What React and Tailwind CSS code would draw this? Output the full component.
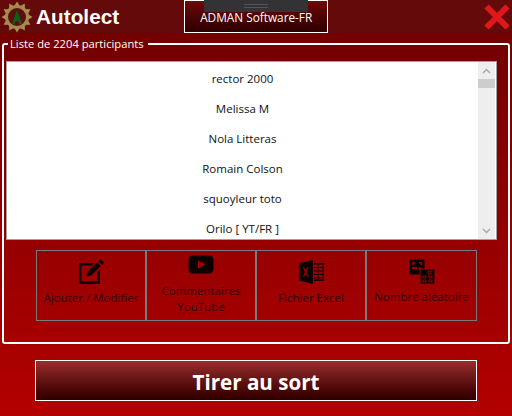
const participants = ["rector 2000", "Melissa M", "Nola Litteras", "Romain Colson", "squoyleur toto", "Orilo [ YT/FR ]"];

const LogoIcon = () => {
    const teeth = Array.from({ length: 12 }, (_, i) => i * 30);
    return (
        <svg width="32" height="32" viewBox="0 0 32 32">
            {teeth.map((a) => (
                <polygon key={a} points="13,5.500 16,0.500 19,5.500" fill="#a8945a" transform={`rotate(${a} 16 16)`} />
            ))}
            <circle cx="16" cy="16" r="10.500" fill="#5a1010" stroke="#a8894a" strokeWidth="3" />
            <path d="M16 9 L21 23 H18.400 L17.600 20 H14.400 L13.600 23 H11 Z" fill="#0a6214" />
        </svg>
    );
};

const EditIcon = () => (
    <svg width="26" height="26" viewBox="0 0 26 26" fill="#0c0000">
        <path d="M1 4h15l-2.400 2.400H3.400v16.200h16.200V13l2.400-2.400V25H1z" />
        <path d="M9.500 12.800 19 3.300l3.700 3.700-9.500 9.500-4.700 1z" />
        <path d="M20.200 2.100 21.500 0.900a1.300 1.300 0 0 1 1.800 0l1.900 1.900a1.300 1.300 0 0 1 0 1.800l-1.300 1.300z" />
    </svg>
);

const YoutubeIcon = () => (
    <svg width="26" height="19" viewBox="0 0 26 19">
        <rect x="0.500" y="0.500" width="25" height="18" rx="4.500" fill="#0c0000" />
        <path d="M10 5.500 17.500 9.500 10 13.500z" fill="#a00000" />
    </svg>
);

const ExcelIcon = () => (
    <svg width="26" height="26" viewBox="0 0 26 26" fill="#0c0000">
        <path d="M1 4.500 15 1v24L1 21.500z" />
        <path d="M16 4h10v18H16v-1.500h8.500V5.500H16z" />
        <path d="M16 8.500h9M16 12h9M16 15.500h9M16 19h9M20 5v16" stroke="#0c0000" strokeWidth="1" />
        <path d="M5.500 8.500 10 17.500M10 8.500 5.500 17.500" stroke="#a00000" strokeWidth="1.300" />
    </svg>
);

const DiceIcon = () => (
    <svg width="26" height="25" viewBox="0 0 26 25">
        <rect x="0.500" y="0.500" width="15" height="15" rx="1.500" fill="#0c0000" />
        <rect x="11" y="10" width="15" height="15" rx="1.500" fill="#0c0000" stroke="#a00000" strokeWidth="1" />
        <path d="M3 3h3v1.500H4.500V6H3zM10 3h3v3h-1.500V4.500H10zM3 8h5v2H3zM9.500 8.500h3v2h-3z" fill="#a00000" />
        <path d="M19 12h3v3h-3zM14 17h3v2h-3zM20 17h3v2h-3zM14 21h3v2h-3zM20 21h3v2h-3z" fill="none" stroke="#a00000" strokeWidth="0.900" />
    </svg>
);

const tools = [
    { label: ["Ajouter / Modifier"], icon: <EditIcon />, cell: "w-[110px] shrink-0 border-r-2 border-[#7a7a7a] pt-[8px] gap-[5px]" },
    { label: ["Commentaires", "YouTube"], icon: <YoutubeIcon />, cell: "w-[110px] shrink-0 border-r-2 border-[#7a7a7a] pt-[4px] gap-[9px]" },
    { label: ["Fichier Excel"], icon: <ExcelIcon />, cell: "w-[110px] shrink-0 border-r-2 border-[#7a7a7a] pt-[8px] gap-[5px]" },
    { label: ["Nombre aléatoire"], icon: <DiceIcon />, cell: "flex-1 pt-[8px] gap-[5px]" },
];

const App = () => {
    return (
        <div className="relative w-[512px] h-[416px] overflow-hidden flex flex-col bg-gradient-to-b from-[#6e0000] to-[#b40000] font-['Open_Sans','Noto_Sans',sans-serif]">
            {/* title bar */}
            <div className="h-[33px] shrink-0 bg-[#640a0a] flex items-start">
                <div className="w-[32px] ml-[1px] mt-[1px]"><LogoIcon /></div>
                <div className="ml-[3px] mt-[2px] text-[20.800px] leading-[30px] font-bold text-white font-['Liberation_Sans',sans-serif]">Autolect</div>
                <div className="ml-[65px] w-[144px] h-[33px] border border-white bg-gradient-to-b from-[#6e0a0a] to-[#2e0000] flex items-center justify-center pt-[2px] text-[11.800px] text-white">ADMAN Software-FR</div>
                <div className="ml-auto mr-[2px] mt-[4px]">
                    <svg width="26" height="26" viewBox="0 0 26 26">
                        <path d="M2.500 2.500 23.500 23.500M23.500 2.500 2.500 23.500" stroke="#e0181c" strokeWidth="6" />
                    </svg>
                </div>
            </div>

            {/* top overlay strip */}
            <div className="absolute left-[204px] top-0 w-[104px] h-[12px] bg-[#333335] flex items-center">
                <div className="ml-[40px] w-[24px] h-[4px] border-y border-[#555]"></div>
            </div>

            {/* participants group */}
            <fieldset className="mx-[2px] mt-[3px] h-[308px] border-2 border-white rounded-[3px] px-[2px]">
                <legend className="ml-[2px] pl-[2px] pr-[4px] text-[11.200px] leading-[16px] text-white">Liste de 2204 participants</legend>
                <div className="mt-[9px] w-[491px] h-[179px] border border-[#a0a0a0] bg-white flex overflow-hidden">
                    <div className="flex-1 flex flex-col pt-[2px]">
                        {participants.map((name, index) => (
                            <div key={index} className="h-[30px] shrink-0 flex items-center justify-center text-[11.500px] text-[#111]">{name}</div>
                        ))}
                    </div>
                    <div className="w-[17px] mr-[1px] bg-[#eeeeee] flex flex-col items-center">
                        <div className="h-[17px] flex items-center justify-center">
                            <svg width="9" height="6" viewBox="0 0 9 6"><path d="M1 5 4.500 1.500 8 5" fill="none" stroke="#a8a8a8" strokeWidth="1.500" /></svg>
                        </div>
                        <div className="w-full h-[9px] bg-[#cdcdcd]"></div>
                        <div className="mt-auto h-[17px] flex items-center justify-center">
                            <svg width="9" height="6" viewBox="0 0 9 6"><path d="M1 1 4.500 4.500 8 1" fill="none" stroke="#a8a8a8" strokeWidth="1.500" /></svg>
                        </div>
                    </div>
                </div>

                <div className="mt-[10px] ml-[30px] w-[441px] h-[71px] border border-[#7a7a7a] flex">
                    {tools.map((tool, index) => (
                        <div key={index} className={"flex flex-col items-center text-[11.500px] leading-[16px] text-[#2e0000] " + tool.cell}>
                            {tool.icon}
                            <div className="text-center">
                                {tool.label.map((line) => <div key={line}>{line}</div>)}
                            </div>
                        </div>
                    ))}
                </div>
            </fieldset>

            {/* draw button */}
            <div className="mt-[16px] ml-[35px] w-[442px] h-[41px] border border-white bg-gradient-to-b from-[#9a2e2e] to-[#300000] flex items-center justify-center pt-[3px] text-[20.600px] font-bold text-white">Tirer au sort</div>
        </div>
    );
};

export default App;
